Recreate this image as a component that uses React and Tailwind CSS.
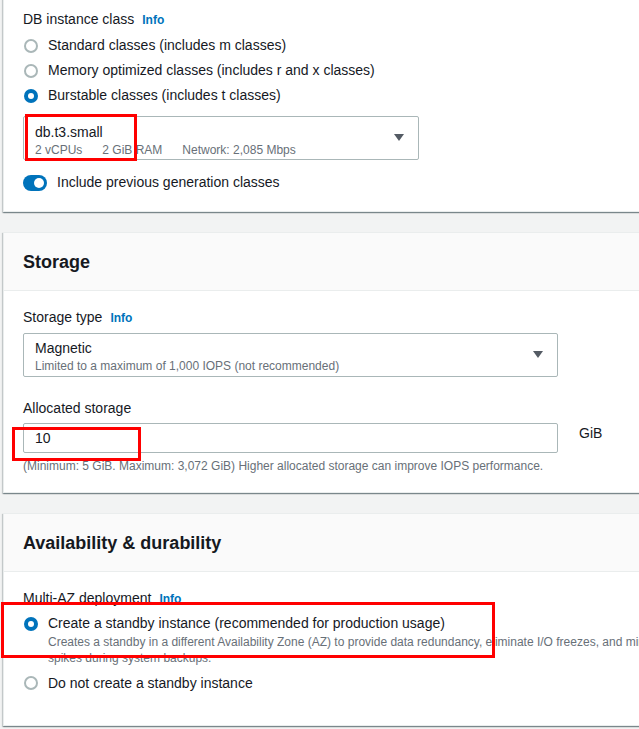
import React from "react";

function Info() {
  return <span className="ml-2 text-[12px] font-bold text-[#0073bb]">Info</span>;
}

function Radio({ checked }) {
  if (checked) {
    return (
      <span className="flex h-[14px] w-[14px] shrink-0 items-center justify-center rounded-full bg-[#0073bb]">
        <span className="h-[6px] w-[6px] rounded-full bg-white" />
      </span>
    );
  }
  return <span className="h-[14px] w-[14px] shrink-0 rounded-full border-2 border-[#aab7b8] bg-white" />;
}

function Caret({ className = "" }) {
  return (
    <svg width="10" height="8" viewBox="0 0 10 8" className={className}>
      <path d="M0 0h10L5 7z" fill="#545b64" />
    </svg>
  );
}

function RedBox({ className }) {
  return <div className={"pointer-events-none absolute border-[3px] border-[#ff0000] " + className} />;
}

function Card({ title, children, className = "" }) {
  return (
    <div
      className={
        "w-[760px] border border-[#eaeded] bg-white shadow-[0_1px_1px_0_rgba(0,28,36,0.3),1px_1px_1px_0_rgba(0,28,36,0.15),-1px_1px_1px_0_rgba(0,28,36,0.15)] " +
        className
      }
    >
      {title && (
        <div className="flex h-[58px] items-center border-b border-[#eaeded] bg-[#fafafa] px-[19px] pt-[1px]">
          <h2 className="text-[18px] font-bold leading-none text-[#16191f]">{title}</h2>
        </div>
      )}
      {children}
    </div>
  );
}

export default function App() {
  return (
    <div
      className="relative h-[729px] w-[639px] overflow-hidden bg-[#f2f3f3] text-[14px] text-[#16191f]"
      style={{ fontFamily: '"Liberation Sans", Arial, sans-serif' }}
    >
      <div className="flex flex-col gap-[20px] pl-[3px]">
        {/* DB instance class (top cut off) */}
        <Card className="-mt-[20px] border-t-0">
          <div className="px-[19px] pb-[18px] pt-[28px]">
            <div className="flex items-baseline leading-[22px]">
              <span>DB instance class</span>
              <Info />
            </div>
            <div className="mt-[2px] flex flex-col">
              {[
                ["Standard classes (includes m classes)", false],
                ["Memory optimized classes (includes r and x classes)", false],
                ["Burstable classes (includes t classes)", true],
              ].map(([label, checked]) => (
                <div key={label} className="flex h-[25px] items-center gap-[10px] pl-[1px]">
                  <Radio checked={checked} />
                  <span>{label}</span>
                </div>
              ))}
            </div>
            <div className="mt-[8px] flex h-[44px] w-[396px] items-center justify-between rounded-[2px] border border-[#aab7b8] pl-[11px] pr-[14px]">
              <div className="flex flex-col pt-[5px] leading-none">
                <span className="text-[14px]">db.t3.small</span>
                <span className="mt-[5px] flex gap-[20px] text-[12px] text-[#687078]">
                  <span>2 vCPUs</span>
                  <span>2 GiB RAM</span>
                  <span>Network: 2,085 Mbps</span>
                </span>
              </div>
              <Caret />
            </div>
            <div className="mt-[12px] flex items-center gap-[10px]">
              <span className="flex h-[16px] w-[24px] items-center justify-end rounded-full bg-[#0073bb] pr-[3px]">
                <span className="h-[10px] w-[10px] rounded-full bg-white" />
              </span>
              <span>Include previous generation classes</span>
            </div>
          </div>
        </Card>

        {/* Storage */}
        <Card title="Storage">
          <div className="px-[19px] pb-[18px] pt-[15px]">
            <div className="flex items-baseline leading-[22px]">
              <span>Storage type</span>
              <Info />
            </div>
            <div className="mt-[4px] flex h-[44px] w-[535px] items-center justify-between rounded-[2px] border border-[#aab7b8] pl-[11px] pr-[14px]">
              <div className="flex flex-col pt-[3px] leading-none">
                <span>Magnetic</span>
                <span className="mt-[5px] text-[12px] text-[#687078]">
                  Limited to a maximum of 1,000 IOPS (not recommended)
                </span>
              </div>
              <Caret />
            </div>
            <div className="mt-[20px] leading-[22px]">Allocated storage</div>
            <div className="mt-[4px] flex items-start gap-[21px]">
              <div className="flex h-[30px] w-[535px] items-center rounded-[2px] border border-[#aab7b8] px-[11px]">
                10
              </div>
              <span className="leading-[21px]">GiB</span>
            </div>
            <div className="mt-[5px] text-[12px] leading-[16px] text-[#687078]">
              (Minimum: 5 GiB. Maximum: 3,072 GiB) Higher allocated storage can improve IOPS performance.
            </div>
          </div>
        </Card>

        {/* Availability & durability */}
        <Card title="Availability & durability">
          <div className="px-[19px] pb-[31px] pt-[15px]">
            <div className="flex items-baseline leading-[22px]">
              <span>Multi-AZ deployment</span>
              <Info />
            </div>
            <div className="mt-[3px] flex items-start gap-[10px] pl-[1px]">
              <span className="mt-[4px]">
                <Radio checked />
              </span>
              <div className="flex w-[700px] flex-col">
                <span className="leading-[21px]">Create a standby instance (recommended for production usage)</span>
                <span className="text-[12px] leading-[16px] text-[#687078]">
                  Creates a standby in a different Availability Zone (AZ) to provide data redundancy, eliminate I/O
                  freezes, and minimize latency spikes during system backups.
                </span>
              </div>
            </div>
            <div className="mt-[6px] flex h-[22px] items-center gap-[10px] pl-[1px]">
              <Radio checked={false} />
              <span>Do not create a standby instance</span>
            </div>
          </div>
        </Card>
      </div>

      <RedBox className="left-[25px] top-[114px] h-[47px] w-[112px]" />
      <RedBox className="left-[12px] top-[427px] h-[34px] w-[129px]" />
      <RedBox className="left-[1px] top-[602px] h-[56px] w-[494px]" />
    </div>
  );
}
